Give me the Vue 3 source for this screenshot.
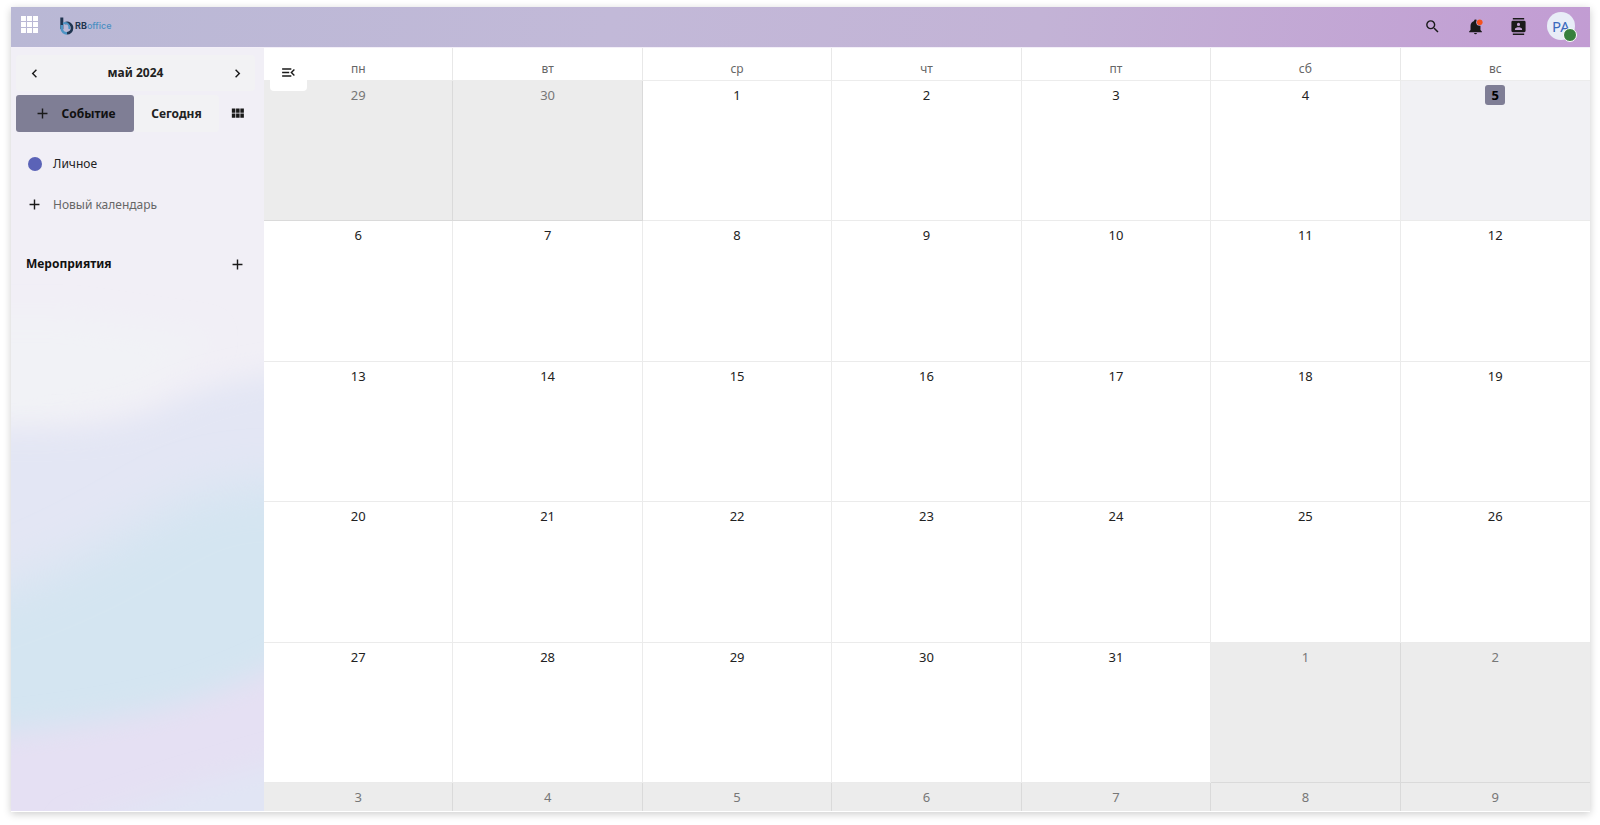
<script setup>
import { ref, computed } from 'vue';

const icons = {
    apps: 'M0,0H7V7H0ZM8.5,0H15.5V7H8.5ZM17,0H24V7H17ZM0,8.5H7V15.5H0ZM8.5,8.5H15.5V15.5H8.5ZM17,8.5H24V15.5H17ZM0,17H7V24H0ZM8.5,17H15.5V24H8.5ZM17,17H24V24H17Z',
    search: 'M9.5,3A6.5,6.5 0 0,1 16,9.5C16,11.11 15.41,12.59 14.44,13.73L14.71,14H15.5L20.5,19L19,20.5L14,15.5V14.71L13.73,14.44C12.59,15.41 11.11,16 9.5,16A6.5,6.5 0 0,1 3,9.5A6.5,6.5 0 0,1 9.5,3M9.5,5C7,5 5,7 5,9.5C5,12 7,14 9.5,14C12,14 14,12 14,9.5C14,7 12,5 9.5,5Z',
    bell: 'M21,19V20H3V19L5,17V11C5,7.9 7.03,5.17 10,4.29C10,4.19 10,4.1 10,4A2,2 0 0,1 12,2A2,2 0 0,1 14,4C14,4.1 14,4.19 14,4.29C16.97,5.17 19,7.9 19,11V17L21,19M14,21A2,2 0 0,1 12,23A2,2 0 0,1 10,21',
    contacts: 'M20,0H4V2H20V0M4,24H20V22H4V24M20,4H4A2,2 0 0,0 2,6V18A2,2 0 0,0 4,20H20A2,2 0 0,0 22,18V6A2,2 0 0,0 20,4M12,6.75A2.25,2.25 0 0,1 14.25,9A2.25,2.25 0 0,1 12,11.25A2.25,2.25 0 0,1 9.75,9A2.25,2.25 0 0,1 12,6.75M17,17H7V15.5C7,13.83 10.33,13 12,13C13.67,13 17,13.83 17,15.5V17Z',
    left: 'M15.41,16.58L10.83,12L15.41,7.41L14,6L8,12L14,18L15.41,16.58Z',
    right: 'M8.59,16.58L13.17,12L8.59,7.41L10,6L16,12L10,18L8.59,16.58Z',
    plus: 'M19,13H13V19H11V13H5V11H11V5H13V11H19V13Z',
    view: 'M16,5V11H21V5M10,11H15V5H10M16,18H21V12H16M10,18H15V12H10M4,18H9V12H4M4,11H9V5H4V11Z',
    menu: 'M21,15.61L19.59,17L14.58,12L19.59,7L21,8.39L17.44,12L21,15.61M3,6H16V8H3V6M3,13V11H13V13H3M3,18V16H16V18H3Z',
};

const year = ref(2024);
const month = ref(4);
const today = new Date(2024, 4, 5);
const weekdays = ['пн', 'вт', 'ср', 'чт', 'пт', 'сб', 'вс'];
const months = ['январь', 'февраль', 'март', 'апрель', 'май', 'июнь', 'июль', 'август', 'сентябрь', 'октябрь', 'ноябрь', 'декабрь'];

const title = computed(() => `${months[month.value]} ${year.value}`);

// six weeks, starting from the monday before the first day
const weeks = computed(() => {
    const offset = (new Date(year.value, month.value, 1).getDay() + 6) % 7;
    const rows = [];
    for (let w = 0; w < 6; w++) {
        const row = [];
        for (let d = 0; d < 7; d++) {
            const date = new Date(year.value, month.value, 1 - offset + w * 7 + d);
            row.push({
                day: date.getDate(),
                other: date.getMonth() !== month.value,
                today: date.getTime() === today.getTime(),
            });
        }
        rows.push(row);
    }
    return rows;
});

const goTo = (date) => {
    year.value = date.getFullYear();
    month.value = date.getMonth();
};
const shiftMonth = (n) => goTo(new Date(year.value, month.value + n, 1));

const sidebarOpen = ref(true);
</script>

<template>
    <div class="page">
        <div class="app">
            <header class="header">
                <button class="apps-btn" aria-label="Приложения">
                    <svg viewBox="0 0 24 24"><path :d="icons.apps" /></svg>
                </button>
                <a class="logo" href="#">
                    <svg viewBox="0 0 14 18">
                        <path d="M1.8,0.5V12" stroke="#1f3550" stroke-width="3" fill="none" />
                        <path d="M5,6.2A5,5 0 0,1 12,11.2A5,5 0 0,1 7,16.2" stroke="#1f3550" stroke-width="2.6" fill="none" />
                        <path d="M3,6.6C8,4.6 10,8.5 9.2,12" stroke="#4d94c4" stroke-width="1.8" fill="none" />
                        <path d="M1.8,8V12A5,5 0 0,0 7,16.4" stroke="#4d94c4" stroke-width="2.6" fill="none" />
                    </svg>
                    <span class="logo-rb">RB</span><span class="logo-office">office</span>
                </a>
                <nav class="tools">
                    <button class="tool" aria-label="Поиск">
                        <svg class="icon" viewBox="0 0 24 24"><path :d="icons.search" /></svg>
                    </button>
                    <button class="tool" aria-label="Уведомления">
                        <svg class="icon" viewBox="0 0 24 24">
                            <path :d="icons.bell" />
                            <circle cx="18" cy="6" r="5" fill="#c3a5d4" />
                            <circle cx="18" cy="6" r="4" fill="#f4511e" />
                        </svg>
                    </button>
                    <button class="tool" aria-label="Контакты">
                        <svg class="icon" viewBox="0 0 24 24"><path :d="icons.contacts" /></svg>
                    </button>
                    <button class="tool" aria-label="Профиль">
                        <span class="avatar">PA<span class="status"></span></span>
                    </button>
                </nav>
            </header>

            <div class="body">
                <aside v-if="sidebarOpen" class="sidebar">
                    <svg class="waves" viewBox="0 0 252 764" preserveAspectRatio="none" aria-hidden="true">
                        <defs>
                            <filter id="soft" x="-50%" y="-50%" width="200%" height="200%">
                                <feGaussianBlur stdDeviation="14" />
                            </filter>
                            <filter id="softer" x="-50%" y="-50%" width="200%" height="200%">
                                <feGaussianBlur stdDeviation="24" />
                            </filter>
                        </defs>
                        <rect width="252" height="764" fill="#f1eff6" />
                        <path d="M-60,270H60L200,290L130,350L-60,400Z" fill="#f1f2f6" filter="url(#soft)" />
                        <path d="M-60,378C60,385 110,380 160,355C200,336 230,330 320,318V820H-60Z" fill="#e3e6f4" filter="url(#soft)" />
                        <path d="M-60,560C40,530 90,500 150,465C190,442 230,430 320,440V820H-60Z" fill="#d4e5f1" filter="url(#softer)" />
                        <path d="M-60,690C60,680 150,665 200,645C230,634 260,622 320,590V840H-60Z" fill="#e5e0f3" filter="url(#soft)" />
                        <path d="M60,780L180,740L320,700V840H60Z" fill="#e1e5f4" filter="url(#soft)" />
                    </svg>

                    <div class="month-nav">
                        <button class="square" aria-label="Предыдущий месяц" @click="shiftMonth(-1)">
                            <svg class="icon" viewBox="0 0 24 24"><path :d="icons.left" /></svg>
                        </button>
                        <button class="month-title">{{ title }}</button>
                        <button class="square" aria-label="Следующий месяц" @click="shiftMonth(1)">
                            <svg class="icon" viewBox="0 0 24 24"><path :d="icons.right" /></svg>
                        </button>
                    </div>

                    <div class="actions">
                        <button class="new-event">
                            <svg class="icon" viewBox="0 0 24 24"><path :d="icons.plus" /></svg>
                            Событие
                        </button>
                        <button class="today-btn" @click="goTo(today)">Сегодня</button>
                        <button class="square" aria-label="Вид">
                            <svg class="icon" viewBox="0 0 24 24"><path :d="icons.view" /></svg>
                        </button>
                    </div>

                    <ul class="calendars">
                        <li>
                            <button class="cal-item"><span class="dot"></span>Личное</button>
                        </li>
                        <li>
                            <button class="cal-item muted">
                                <svg class="icon" viewBox="0 0 24 24"><path :d="icons.plus" /></svg>
                                Новый календарь
                            </button>
                        </li>
                    </ul>

                    <div class="section">
                        <h2>Мероприятия</h2>
                        <button class="square" aria-label="Добавить">
                            <svg class="icon" viewBox="0 0 24 24"><path :d="icons.plus" /></svg>
                        </button>
                    </div>
                </aside>

                <main class="main">
                    <button class="toggle" aria-label="Меню" @click="sidebarOpen = !sidebarOpen">
                        <svg class="icon" viewBox="0 0 24 24"><path :d="icons.menu" /></svg>
                    </button>
                    <table class="calendar">
                        <thead>
                            <tr>
                                <th v-for="name in weekdays" :key="name">{{ name }}</th>
                            </tr>
                        </thead>
                        <tbody>
                            <tr v-for="(week, i) in weeks" :key="i">
                                <td v-for="(cell, j) in week" :key="j" :class="{ other: cell.other, today: cell.today }">
                                    <span class="day">{{ cell.day }}</span>
                                </td>
                            </tr>
                        </tbody>
                    </table>
                </main>
            </div>
        </div>
    </div>
</template>

<style>
body {
    background: #fff;
}
</style>

<style scoped>
.page {
    box-sizing: border-box;
    height: 100vh;
    padding: 7px 10px 13px 11px;
    font-family: "Noto Sans", "Open Sans", sans-serif;
    font-size: 12px;
    line-height: 20px;
    color: #222;
}

.page * {
    box-sizing: border-box;
}

button {
    display: flex;
    align-items: center;
    justify-content: center;
    padding: 0;
    border: none;
    background: none;
    font: inherit;
    color: inherit;
    cursor: pointer;
}

.icon {
    width: 17px;
    height: 17px;
    fill: #1a1a1a;
    flex: none;
}

.app {
    display: flex;
    flex-direction: column;
    height: 100%;
    box-shadow: 0 2px 8px rgba(0, 0, 0, 0.2);
}

.header {
    display: flex;
    align-items: center;
    flex: none;
    height: 40px;
    padding: 0 12px 2px 7px;
    background: linear-gradient(100deg, #b9b8d5 0%, #c2b9d8 38%, #c3b3d6 65%, #c29cd3 100%);
}

.apps-btn {
    width: 22px;
    height: 36px;
}

.apps-btn svg {
    width: 17px;
    height: 17px;
    margin-bottom: 4px;
    fill: #fff;
}

.logo {
    display: flex;
    align-items: center;
    margin-left: 20px;
    font-family: Inter, sans-serif;
    line-height: 12px;
    text-decoration: none;
}

.logo svg {
    width: 14px;
    height: 18px;
    margin-right: 1px;
}

.logo-rb {
    font-size: 9px;
    font-weight: 700;
    color: #1f3550;
}

.logo-office {
    font-size: 9px;
    font-weight: 500;
    color: #4a8fc2;
}

.tools {
    display: flex;
    gap: 9px;
    margin-left: auto;
}

.tool {
    width: 34px;
    height: 34px;
}

.tool .icon {
    overflow: visible;
}

.avatar {
    position: relative;
    width: 28px;
    height: 28px;
    border-radius: 50%;
    background: #e8edf7;
    font-size: 15px;
    line-height: 28px;
    color: #3a69bd;
}

.status {
    position: absolute;
    right: -2px;
    bottom: -2px;
    width: 14px;
    height: 14px;
    border: 1px solid #fff;
    border-radius: 50%;
    background: #37803d;
}

.body {
    display: flex;
    flex: 1;
    min-height: 0;
    border-top: 1px solid #f3eff8;
    border-bottom: 1px solid #fff;
}

.sidebar {
    position: relative;
    display: flex;
    flex-direction: column;
    flex: none;
    width: 253px;
    padding: 7px 9px 7px 5px;
    overflow: hidden;
}

.sidebar > * {
    position: relative;
}

.sidebar .waves {
    position: absolute;
    top: 0;
    left: 0;
    width: 100%;
    height: 100%;
}

.square {
    width: 36px;
    height: 36px;
    border-radius: 4px;
}

.month-nav {
    display: flex;
    align-items: center;
    background: #f2f2f4;
    border-radius: 4px;
}

.month-title {
    flex: 1;
    font-weight: 700;
}

.actions {
    display: flex;
    align-items: center;
    margin-top: 4px;
}

.new-event {
    gap: 10px;
    width: 118px;
    height: 37px;
    border-radius: 3px;
    background: #7f7e95;
    font-weight: 700;
    color: #111;
}

.today-btn {
    flex: 1;
    height: 37px;
    border-radius: 4px;
    background: #f2f2f4;
    font-weight: 700;
}

.calendars {
    margin: 11px 0 0;
    padding: 0;
    list-style: none;
}

.cal-item {
    justify-content: flex-start;
    gap: 10px;
    width: 100%;
    height: 41px;
    padding: 0 10px;
}

.muted {
    color: #666;
}

.dot {
    width: 14px;
    height: 14px;
    margin: 0 1px 0 2px;
    border-radius: 50%;
    background: #5b63b7;
}

.section {
    display: flex;
    align-items: center;
    justify-content: space-between;
    margin-top: 21px;
    padding-left: 10px;
}

.section h2 {
    margin: 0;
    font-size: 12px;
    font-weight: 700;
    color: #111;
}

.main {
    position: relative;
    flex: 1;
    min-width: 0;
    background: #fff;
}

.toggle {
    position: absolute;
    top: 6px;
    left: 6px;
    z-index: 1;
    width: 37px;
    height: 37px;
    border-radius: 4px;
    background: #fff;
}

.calendar {
    display: grid;
    grid-template-rows: 33px repeat(5, 1fr) 28px;
    height: 100%;
}

.calendar thead,
.calendar tbody {
    display: contents;
}

.calendar tr {
    display: grid;
    grid-template-columns: repeat(7, 1fr);
    min-height: 0;
}

.calendar th {
    padding: 11px 0 0;
    border-right: 1px solid #e8e8e8;
    border-bottom: 1px solid #ececec;
    font-weight: 400;
    text-align: center;
    color: #666;
}

.calendar td {
    display: flex;
    justify-content: center;
    align-items: flex-start;
    padding: 4px 0 0;
    border-right: 1px solid #ebebeb;
    border-bottom: 1px solid #ebebeb;
}

.calendar th:last-child,
.calendar td:last-child {
    border-right: none;
}

.calendar tr:last-child td {
    border-bottom: none;
}

.calendar .other {
    background: #ececec;
    border-color: #dadada;
    color: #777;
}

.calendar .today {
    background: #f1f1f4;
}

.day {
    min-width: 20px;
    height: 20px;
    font-size: 13px;
    text-align: center;
}

.today .day {
    border-radius: 3px;
    background: #7f7e95;
    font-weight: 700;
    color: #000;
}
</style>
